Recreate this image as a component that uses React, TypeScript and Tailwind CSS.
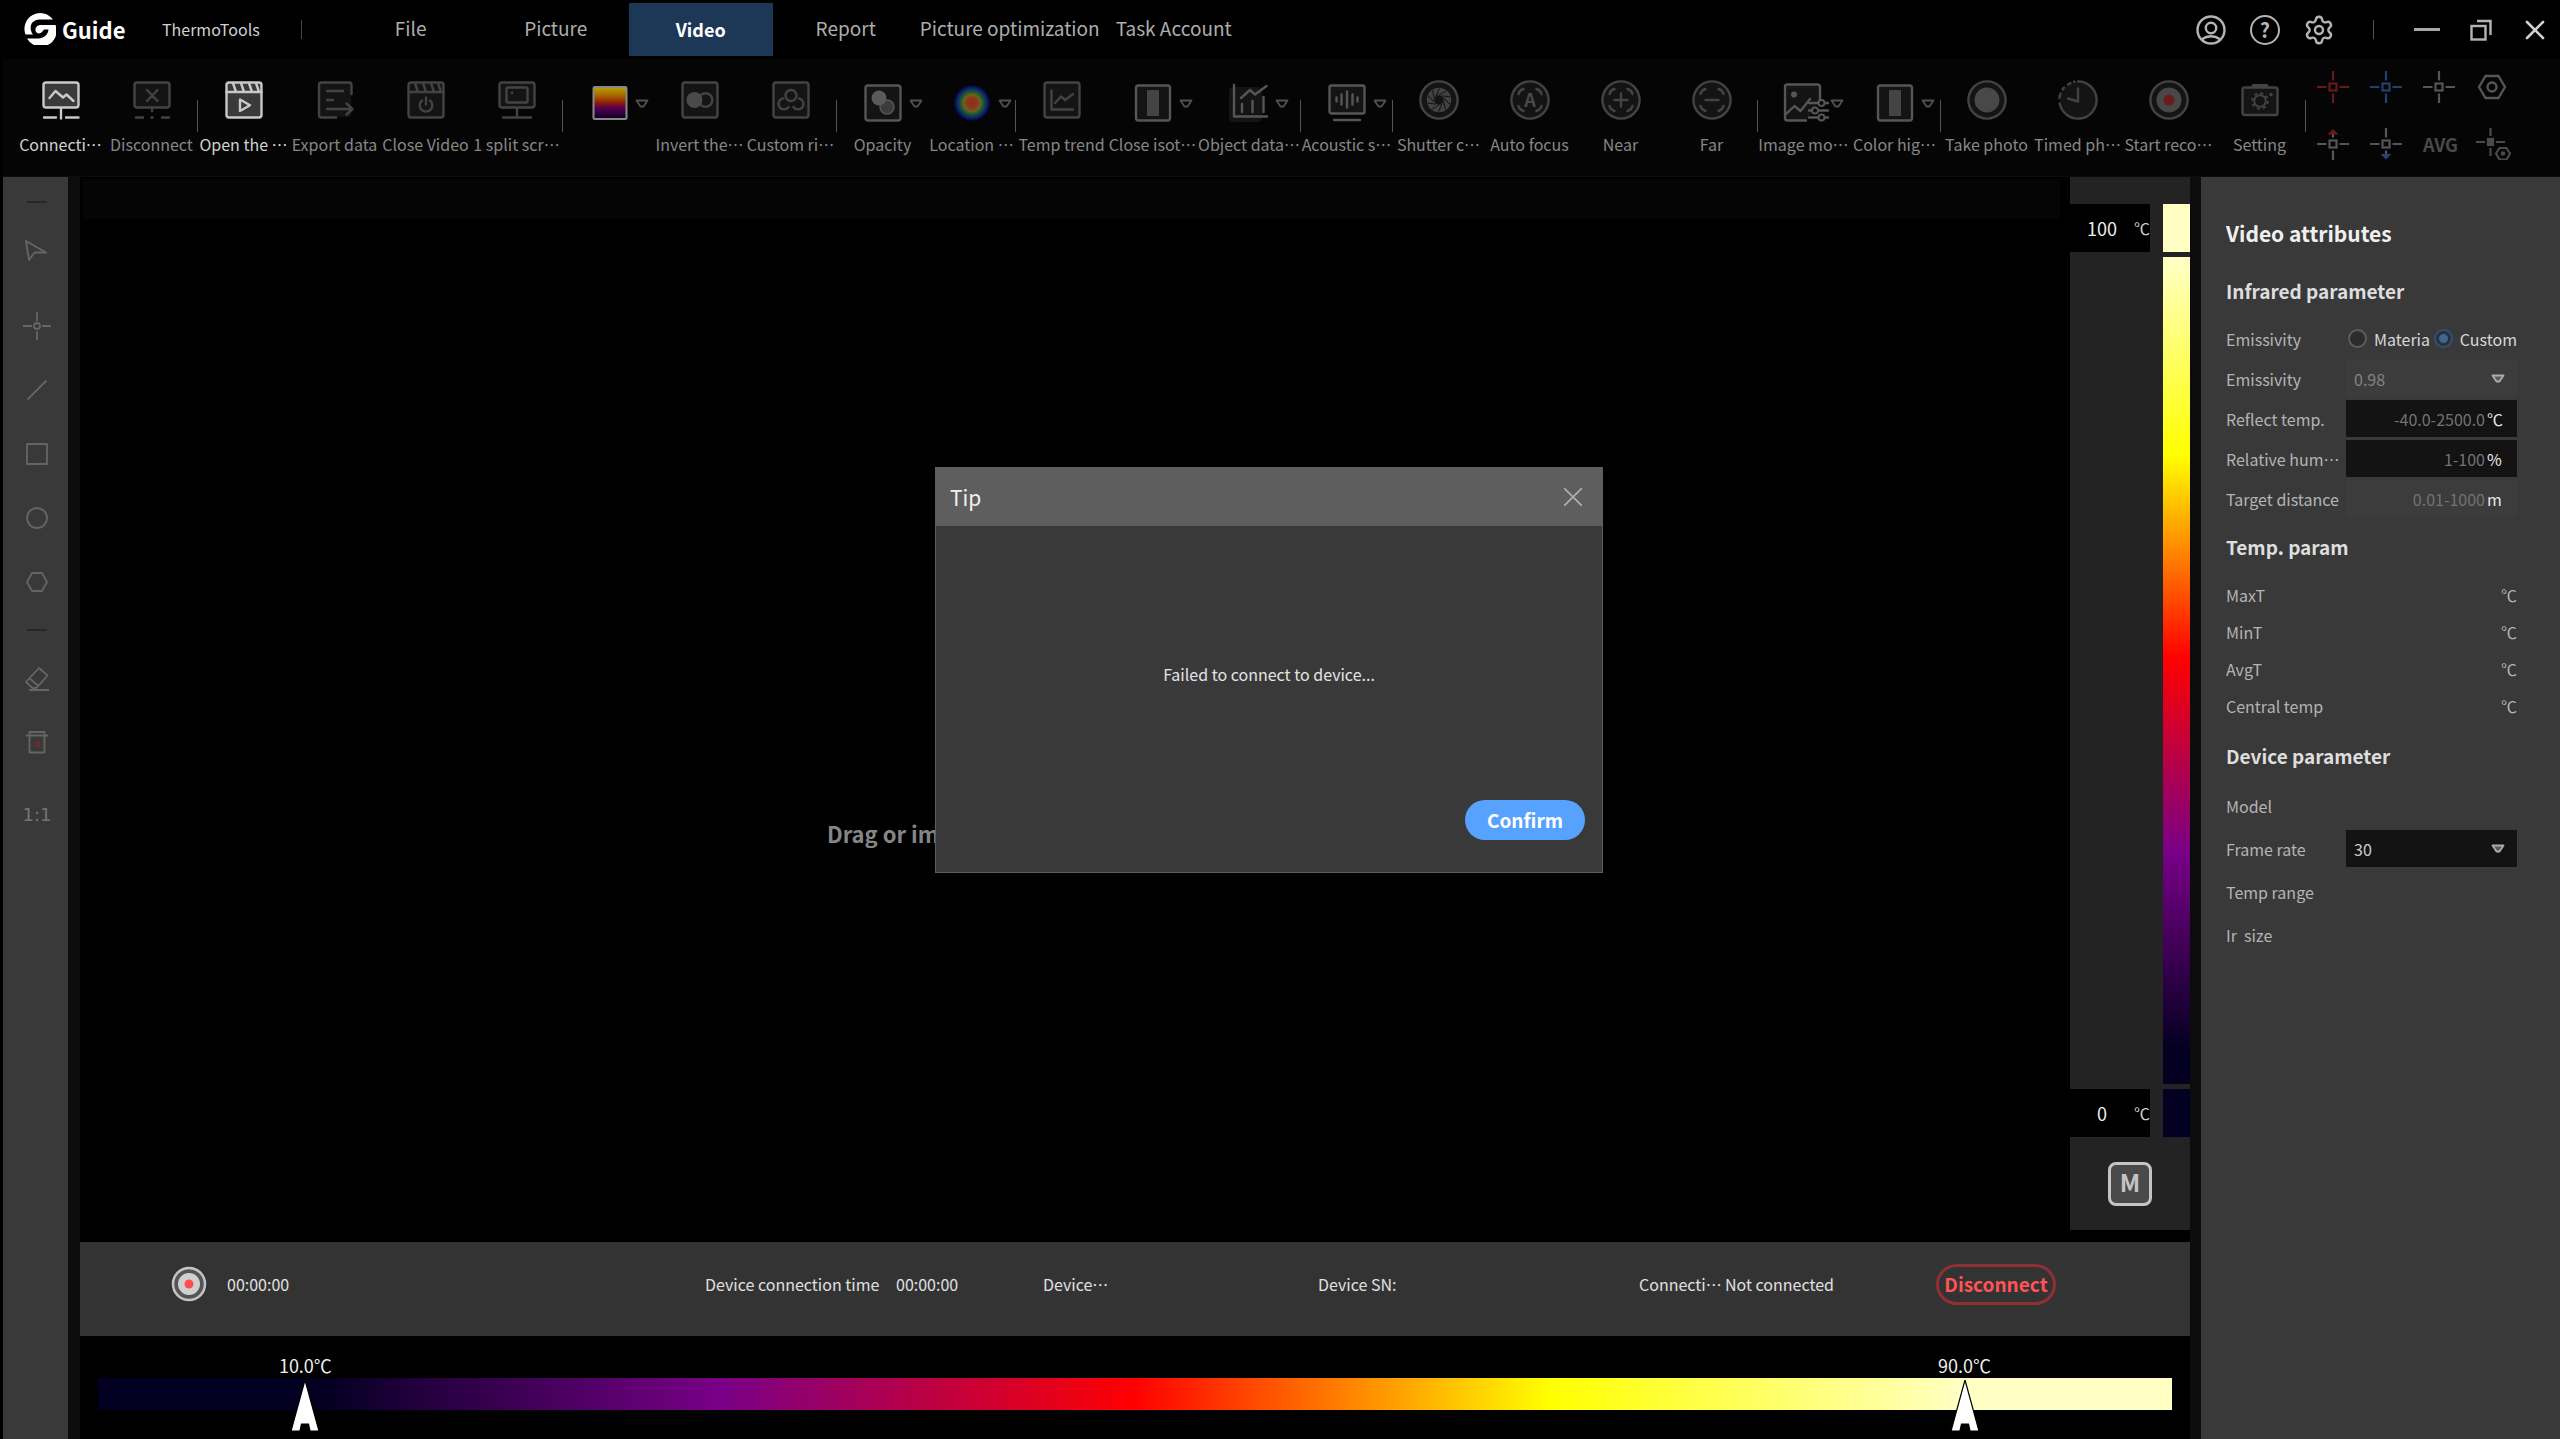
import type { ReactNode } from "react";
import { Settings } from "lucide-react";

/* ---------- shared drawing helpers ---------- */

function Glyph({ color, fill = "#141414", children }: { color: string; fill?: string; children: ReactNode }) {
  return (
    <svg
      width="40"
      height="40"
      viewBox="0 0 40 40"
      fill={fill}
      stroke={color}
      strokeWidth="2.4"
      strokeLinecap="round"
      strokeLinejoin="round"
      className="overflow-visible"
      aria-hidden="true"
    >
      {children}
    </svg>
  );
}

const DIM = "#434343";
const MID = "#565656";
const LIT = "#c9c9c9";

const clapper = (
  <>
    <rect x="2.5" y="2.5" width="35" height="35" rx="2.5" />
    <path d="M2.5 12h35M9 3l3 9M17 3l3 9M25 3l3 9M32 3l3 9" fill="none" />
  </>
);

const focusCorners = (
  <>
    <circle cx="20" cy="20" r="18.6" />
    <path d="M8.5 14q1-4 5-5M26.500 9q4 1 5 5M31.500 26q-1 4-5 5M13.500 31q-4-1-5-5" fill="none" />
  </>
);

const splitPanel = (
  <>
    <rect x="3" y="5.500" width="34" height="35" rx="2.5" />
    <rect x="14" y="10" width="12" height="26" fill="#444" stroke="none" />
  </>
);

const icons: Record<string, ReactNode> = {
  connect: (
    <Glyph color={LIT} fill="#3a3a3a">
      <rect x="2.5" y="2.5" width="35" height="25" rx="2.5" />
      <path d="M8.500 18l6-7 7.500 6.500 3.500-3 7 6.500M20 28v10.500M3 37.500h12M25 37.500h12.500" fill="none" />
    </Glyph>
  ),
  disconnect: (
    <Glyph color={DIM}>
      <rect x="2.5" y="2.5" width="35" height="25" rx="2.5" />
      <path d="M15 10l10.500 11M25.500 10L15 21M20 28v3M4 37.500h7M19.500 37.500h1M30 37.500h7" fill="none" />
    </Glyph>
  ),
  open: (
    <Glyph color={LIT} fill="#3a3a3a">
      {clapper}
      <path d="M16 19.500v11.500l10-5.800z" fill="none" />
    </Glyph>
  ),
  exportData: (
    <Glyph color={DIM}>
      <rect x="4" y="3" width="32" height="34" rx="2" stroke="none" />
      <path
        d="M36.500 14V5q0-2.500-2.500-2.500H6.500Q4 2.500 4 5v30q0 2.500 2.500 2.500H21M12 11h16M12 20h6M12 29h25M31.500 23.500l6 5.500-6 5.500"
        fill="none"
      />
    </Glyph>
  ),
  closeVideo: (
    <Glyph color={DIM}>
      {clapper}
      <path d="M16 20.500a6.300 6.300 0 1 0 8 0M20 17.500v7" fill="none" />
    </Glyph>
  ),
  screen: (
    <Glyph color={DIM}>
      <rect x="2.5" y="2.5" width="35" height="25" rx="2.5" />
      <rect x="9.500" y="7.500" width="21" height="15" rx="1.5" />
      <path d="M15 12.500v.5M20 28v9M6 37.500h28" fill="none" />
    </Glyph>
  ),
  palette: (
    <svg width="40" height="40" viewBox="0 0 40 40" aria-hidden="true" className="overflow-visible">
      <defs>
        <linearGradient id="iron" x1="0" y1="0" x2="0" y2="1">
          <stop offset="0" stopColor="#b5a800" />
          <stop offset="0.3" stopColor="#a85a00" />
          <stop offset="0.5" stopColor="#8c1a08" />
          <stop offset="0.65" stopColor="#580052" />
          <stop offset="1" stopColor="#0a0022" />
        </linearGradient>
      </defs>
      <rect x="4.500" y="7" width="33" height="32" rx="1.500" fill="url(#iron)" stroke="#8a8a8a" strokeWidth="2" />
    </svg>
  ),
  invert: (
    <Glyph color={DIM}>
      <rect x="2.5" y="2.5" width="35" height="35" rx="2.5" />
      <circle cx="25.500" cy="20" r="6.800" />
      <circle cx="14.500" cy="20" r="8" fill="#4a4a4a" stroke="none" />
    </Glyph>
  ),
  custom: (
    <Glyph color={DIM}>
      <rect x="2.5" y="2.5" width="35" height="35" rx="2.5" />
      <circle cx="20" cy="15.500" r="5.500" fill="none" />
      <path d="M12 18.500a5.500 5.500 0 1 0 5.500 8.500M28 18.500a5.500 5.500 0 1 1-5.500 8.500" fill="none" />
    </Glyph>
  ),
  opacity: (
    <Glyph color={MID}>
      <rect x="2.500" y="5.500" width="35" height="35" rx="2.5" />
      <circle cx="24" cy="27" r="7" fill="#3c3c3c" strokeWidth="1.500" />
      <circle cx="16" cy="18" r="7.500" fill="#5a5a5a" stroke="none" />
    </Glyph>
  ),
  location: (
    <svg width="40" height="40" viewBox="0 0 40 40" aria-hidden="true" className="overflow-visible">
      <defs>
        <radialGradient id="spot">
          <stop offset="0" stopColor="#8a2f1c" />
          <stop offset="0.33" stopColor="#8a3c1c" />
          <stop offset="0.45" stopColor="#6a6420" />
          <stop offset="0.6" stopColor="#1d5a30" />
          <stop offset="0.78" stopColor="#0c2f5e" />
          <stop offset="0.92" stopColor="#06085a" />
          <stop offset="1" stopColor="#050510" stopOpacity="0" />
        </radialGradient>
      </defs>
      <circle cx="20" cy="23" r="18.500" fill="url(#spot)" />
    </svg>
  ),
  trend: (
    <Glyph color={DIM}>
      <rect x="2.5" y="2.5" width="35" height="35" rx="2.5" />
      <path d="M9.500 10.500v19H31M13 23l6-6.500 4 3.500 8-6" fill="none" />
    </Glyph>
  ),
  isotherm: <Glyph color={MID}>{splitPanel}</Glyph>,
  chart: (
    <Glyph color={MID}>
      <rect x="0" y="7" width="33" height="35" rx="4" stroke="none" />
      <path d="M5 5v31.500h33M13 24v8M23.500 21v11M34.500 17v15M12 18l9-8 5 4.500L37.500 6" fill="none" />
    </Glyph>
  ),
  acoustic: (
    <Glyph color={MID}>
      <rect x="2.500" y="5.500" width="35" height="28" rx="2" />
      <path d="M9.500 17.500v4M14.500 14.500v10M20 11.500v16M25.500 14.500v10M30.500 17.500v4M7 40h26" fill="none" />
    </Glyph>
  ),
  shutter: (
    <Glyph color={DIM}>
      <circle cx="20" cy="20" r="18.600" />
      <circle cx="20" cy="20" r="8.500" fill="none" strokeWidth="7.500" />
      <g stroke="#141414" strokeWidth="1">
        {[0, 36, 72, 108, 144, 180, 216, 252, 288, 324].map((a) => (
          <path key={a} d="M20 15l7-4" transform={`rotate(${a} 20 20)`} />
        ))}
      </g>
    </Glyph>
  ),
  auto: (
    <Glyph color={DIM}>
      {focusCorners}
      <text
        x="20"
        y="26.500"
        textAnchor="middle"
        fontSize="18"
        stroke="none"
        fill="#4a4a4a"
        fontFamily="Noto Sans CJK SC, sans-serif"
        fontWeight="700"
      >
        A
      </text>
    </Glyph>
  ),
  near: (
    <Glyph color={DIM}>
      {focusCorners}
      <path d="M13.500 20h13M20 13.500v13" />
    </Glyph>
  ),
  far: (
    <Glyph color={DIM}>
      {focusCorners}
      <path d="M13.500 20h13" />
    </Glyph>
  ),
  imageMode: (
    <Glyph color={MID}>
      <path d="M36 21V7q0-2.500-2.500-2.500H3.500Q1 4.500 1 7v31q0 2.500 2.500 2.500H22" />
      <circle cx="10" cy="14.500" r="1.800" fill={MID} />
      <path d="M2 34l8.500-8 6 5L26 19" fill="none" />
      <path d="M25 23h19M25 30.500h19M25 37.500h19" />
      <g fill="#0a0a0a" strokeWidth="2">
        <circle cx="37.500" cy="23" r="3" />
        <circle cx="31" cy="30.500" r="3" />
        <circle cx="37.500" cy="37.500" r="3" />
      </g>
    </Glyph>
  ),
  colorHigh: <Glyph color={MID}>{splitPanel}</Glyph>,
  photo: (
    <Glyph color={DIM}>
      <circle cx="20" cy="20" r="18.600" />
      <circle cx="20" cy="20" r="12.500" fill="#484848" stroke="none" />
    </Glyph>
  ),
  timed: (
    <Glyph color={DIM}>
      <circle cx="20" cy="20" r="18" stroke="none" />
      <path d="M20 1.400a18.600 18.600 0 1 1-18.300 22M1.500 18q.2-2.500 1-4.500M4.500 9.500l1.500-2M10 4.500l2.500-1.500M16 1.800l.5-.1M20 8.500v13l-10-3" fill="none" />
    </Glyph>
  ),
  record: (
    <Glyph color={DIM}>
      <circle cx="20" cy="20" r="18.600" />
      <circle cx="20" cy="20" r="12.500" fill="#484848" stroke="none" />
      <circle cx="20" cy="20" r="5.500" fill="#6a1c1c" stroke="none" />
    </Glyph>
  ),
  camera: (
    <Glyph color={DIM}>
      <rect x="2.5" y="7.500" width="35" height="27.500" rx="2" />
      <path d="M13 5.500h14" fill="none" strokeWidth="3" />
      <circle cx="20" cy="21" r="5.800" strokeWidth="2" />
      <circle cx="20" cy="21" r="7.800" fill="none" strokeWidth="2" strokeDasharray="3 3.130" strokeLinecap="butt" />
      <path d="M31 14.500v.1" strokeWidth="3.500" />
    </Glyph>
  ),
};

/* ---------- toolbar ---------- */

type Tool = { icon: string; label: string; menu?: boolean; lit?: boolean; width?: string };

const groups: Tool[][] = [
  [
    { icon: "connect", label: "Connecti…", lit: true },
    { icon: "disconnect", label: "Disconnect" },
  ],
  [
    { icon: "open", label: "Open the …", lit: true },
    { icon: "exportData", label: "Export data" },
    { icon: "closeVideo", label: "Close Video" },
    { icon: "screen", label: "1 split scr…" },
  ],
  [
    { icon: "palette", label: "", menu: true },
    { icon: "invert", label: "Invert the…" },
    { icon: "custom", label: "Custom ri…" },
  ],
  [
    { icon: "opacity", label: "Opacity", menu: true },
    { icon: "location", label: "Location …", menu: true, width: "w-[87px]" },
  ],
  [
    { icon: "trend", label: "Temp trend" },
    { icon: "isotherm", label: "Close isot…", menu: true },
    { icon: "chart", label: "Object data…", menu: true, width: "w-[102px]" },
  ],
  [{ icon: "acoustic", label: "Acoustic s…", menu: true }],
  [
    { icon: "shutter", label: "Shutter c…" },
    { icon: "auto", label: "Auto focus" },
    { icon: "near", label: "Near" },
    { icon: "far", label: "Far" },
  ],
  [
    { icon: "imageMode", label: "Image mo…", menu: true },
    { icon: "colorHigh", label: "Color hig…", menu: true },
  ],
  [
    { icon: "photo", label: "Take photo" },
    { icon: "timed", label: "Timed ph…" },
    { icon: "record", label: "Start reco…" },
    { icon: "camera", label: "Setting" },
  ],
];

function Arrow({ color, fill = "none" }: { color: string; fill?: string }) {
  return (
    <svg width="14" height="10" viewBox="0 0 14 10" aria-hidden="true">
      <path d="M1.500 1.500h11L8.500 7.500h-3z" fill={fill} stroke={color} strokeWidth="1.800" strokeLinejoin="round" />
    </svg>
  );
}

function ToolButton({ tool }: { tool: Tool }) {
  return (
    <button
      type="button"
      aria-label={tool.label || "Palette"}
      className={`flex flex-col items-center ${tool.width ?? "w-[91px]"}`}
    >
      <span className="relative block">
        {icons[tool.icon]}
        {tool.menu && (
          <span className="absolute top-[19px] left-[46px]">
            <Arrow color="#505050" />
          </span>
        )}
      </span>
      <span className={`mt-3 text-base leading-6 whitespace-nowrap ${tool.lit ? "text-[#d2d2d2]" : "text-[#878787]"}`}>
        {tool.label}
      </span>
    </button>
  );
}

function Cross({ color, up, down }: { color: string; up?: boolean; down?: boolean }) {
  return (
    <svg width="32" height="32" viewBox="0 0 32 32" fill="none" stroke={color} strokeWidth="2.200" aria-hidden="true">
      <rect x="12.500" y="12.500" width="7" height="7" />
      <path d={`M0 16h9.500M22.500 16H32M16 ${up ? 5 : 0}V9.500M16 22.500V${down ? 27 : 32}`} />
      {up && <path d="M10.500 6.500L16 1l5.500 5.500z" fill="#6b1a1c" stroke="none" />}
      {down && <path d="M10.500 26L16 31.500 21.500 26z" fill="#254472" stroke="none" />}
    </svg>
  );
}

const spotTools: { name: string; icon: ReactNode }[] = [
  { name: "Hot spot", icon: <Cross color="#66191c" /> },
  { name: "Cold spot", icon: <Cross color="#22406c" /> },
  { name: "Center spot", icon: <Cross color="#565656" /> },
  {
    name: "Spot settings",
    icon: (
      <svg width="32" height="32" viewBox="0 0 32 32" fill="none" stroke="#565656" strokeWidth="2.400" aria-hidden="true">
        <path d="M9.500 5h13l6.500 11-6.500 11h-13L3 16z" strokeLinejoin="round" />
        <circle cx="16" cy="16" r="4.500" />
      </svg>
    ),
  },
  { name: "Max", icon: <Cross color="#565656" up /> },
  { name: "Min", icon: <Cross color="#565656" down /> },
  { name: "Average", icon: <span className="text-lg leading-8 font-bold text-[#4a4a4a]">AVG</span> },
  {
    name: "Marker settings",
    icon: (
      <svg width="36" height="32" viewBox="0 0 36 32" fill="none" stroke="#4a4a4a" strokeWidth="2.200" aria-hidden="true">
        <rect x="12" y="11" width="5" height="6" fill="#4a4a4a" />
        <path d="M0 14h9M20 14h9M14.500 0v8M14.500 20v8" />
        <path d="M23.500 20h7l3.500 5.500-3.500 6h-7l-3.500-6z" strokeLinejoin="round" />
        <circle cx="27" cy="25.500" r="1.200" />
      </svg>
    ),
  },
];

/* ---------- header ---------- */

const tabs = [
  { label: "File", width: "w-36" },
  { label: "Picture", width: "w-36" },
  { label: "Video", width: "w-36", active: true },
  { label: "Report", width: "w-36" },
  { label: "Picture optimization", width: "w-[182px]" },
  { label: "Task Account", width: "w-36" },
];

function Header() {
  return (
    <header className="flex h-[59px] shrink-0 items-start bg-black pr-[9px] pl-6">
      <div className="flex h-[58px] items-center gap-1.5">
        <svg width="32" height="32" viewBox="0 0 32 32" fill="none" aria-hidden="true">
          <path d="M1.500 21.500A15.800 15.800 0 0 1 29 6.500H15.500C9 6.500 5.500 11.500 7 17.500q.6 2.400 2 4z" fill="#fff" />
          <path d="M3 25.500A15.800 15.800 0 0 0 31.500 12H17c-4 0-6 2.800-5.500 5.500.6 3.200 4.500 3.800 6.500 1.500l2-2.500h4.500c-.5 5.500-5 9-10 9z" fill="#fff" />
        </svg>
        <span className="w-16 text-[22px] leading-8 font-bold text-white">Guide</span>
      </div>
      <span className="ml-9 text-base leading-[59px] text-[#d0d0d0]">ThermoTools</span>
      <span className="mt-5 ml-[41px] h-[19px] w-px bg-[#444]" />
      <nav className="ml-[37px] flex gap-px pt-[3px]">
        {tabs.map((t) => (
          <button
            type="button"
            key={t.label}
            className={`h-[53px] pb-0.5 ${t.width} ${t.active ? "bg-[#1d3857] text-lg font-bold text-white" : "text-[19px] text-[#adadad]"}`}
          >
            {t.label}
          </button>
        ))}
      </nav>
      <div className="ml-auto flex h-[59px] items-center gap-[22px]">
        <button type="button" aria-label="User" className="flex w-8 justify-center">
          <svg width="30" height="30" viewBox="0 0 30 30" fill="none" stroke="#b4b4b4" strokeWidth="2.400" aria-hidden="true">
            <circle cx="15" cy="15" r="13.500" />
            <circle cx="15" cy="13" r="5.200" />
            <path d="M5.500 24.500q9.500-6.500 19 0" />
          </svg>
        </button>
        <button type="button" aria-label="Help" className="flex w-8 justify-center">
          <span className="flex h-[30px] w-[30px] items-center justify-center rounded-full border-2 border-[#b4b4b4] text-xl font-bold text-[#b4b4b4]">
            ?
          </span>
        </button>
        <button type="button" aria-label="Settings" className="flex w-8 justify-center">
          <Settings size={32} strokeWidth={1.8} color="#b4b4b4" />
        </button>
        <span className="flex w-8 justify-center">
          <span className="h-[19px] w-px bg-[#555]" />
        </span>
        <button type="button" aria-label="Minimize" className="flex w-8 justify-center">
          <svg width="26" height="4" aria-hidden="true">
            <rect width="26" height="3" fill="#a8a8a8" />
          </svg>
        </button>
        <button type="button" aria-label="Restore" className="flex w-8 justify-center">
          <svg width="24" height="24" viewBox="0 0 24 24" fill="none" stroke="#b4b4b4" strokeWidth="2.400" aria-hidden="true">
            <rect x="2.500" y="8" width="14" height="13.500" />
            <path d="M8 3h13.500v14" />
          </svg>
        </button>
        <button type="button" aria-label="Close" className="flex w-8 justify-center">
          <svg width="20" height="20" viewBox="0 0 20 20" stroke="#d0d0d0" strokeWidth="2.600" strokeLinecap="round" aria-hidden="true">
            <path d="M2 2l16 16M18 2L2 18" />
          </svg>
        </button>
      </div>
    </header>
  );
}

function Toolbar() {
  return (
    <div className="ml-[3px] flex h-[117px] shrink-0 items-start bg-[#050505] pl-3">
      {groups.map((g, i) => (
        <div key={i} className="flex items-start">
          <div className="flex pt-[21px]">
            {g.map((t) => (
              <ToolButton key={t.icon} tool={t} />
            ))}
          </div>
          <span className="mt-[41px] h-8 w-px bg-[#555]" />
        </div>
      ))}
      <div className="mt-3 ml-[11px] grid grid-cols-4 gap-x-[21px] gap-y-[25px]">
        {spotTools.map((s) => (
          <button type="button" key={s.name} aria-label={s.name} className="h-8 w-8">
            {s.icon}
          </button>
        ))}
      </div>
    </div>
  );
}

/* ---------- drawing tools ---------- */

const shapes: { name: string; art: ReactNode; className?: string }[] = [
  { name: "Select", art: <path d="M3 3l20 11.500H11.500L6 22z" />, className: "mt-0.5 mb-2.5" },
  {
    name: "Point",
    art: (
      <>
        <circle cx="14" cy="14" r="3" />
        <path d="M0 14h9M19 14h9M14 0v9M14 19v9" />
      </>
    ),
  },
  { name: "Line", art: <path d="M4.500 23.500l19-19" /> },
  { name: "Rectangle", art: <rect x="4" y="4" width="20" height="20" /> },
  { name: "Circle", art: <circle cx="14" cy="14" r="10" /> },
  { name: "Polygon", art: <path d="M9 5h10l5 9-5 9H9l-5-9z" /> },
];

const editing: { name: string; art: ReactNode }[] = [
  {
    name: "Eraser",
    art: <path d="M3 18L16 4l8.500 7.500L13.500 24H9.500zM6.500 14.500l9 7.500M6 26h20" />,
  },
  {
    name: "Delete",
    art: (
      <>
        <path d="M3 7.500h22M6 4h16M6.500 4v20.500h15V4" />
        <path d="M11.500 13l5.500 6M17 13l-5.500 6" stroke="#7a2a2e" />
      </>
    ),
  },
];

function ShapeButton({ name, art, className = "" }: { name: string; art: ReactNode; className?: string }) {
  return (
    <button type="button" aria-label={name} className={`flex h-16 w-full items-center justify-center ${className}`}>
      <svg width="28" height="28" viewBox="0 0 28 28" fill="none" stroke="#656565" strokeWidth="1.800" strokeLinejoin="round" aria-hidden="true">
        {art}
      </svg>
    </button>
  );
}

function Rule() {
  return (
    <span className="flex h-8 items-center">
      <span className="h-0.5 w-5 bg-[#272727]" />
    </span>
  );
}

function DrawingTools() {
  return (
    <aside className="mr-px flex w-[65px] shrink-0 flex-col items-center bg-[#393939] pt-[9px] pl-[3px]">
      <Rule />
      {shapes.map((s) => (
        <ShapeButton key={s.name} {...s} />
      ))}
      <Rule />
      {editing.map((s) => (
        <ShapeButton key={s.name} {...s} />
      ))}
      <button type="button" className="mt-[9px] h-16 w-full font-[DejaVu_Sans,sans-serif] text-lg text-[#757575]">
        1:1
      </button>
    </aside>
  );
}

/* ---------- centre ---------- */

function ScaleLimit({ value, swatch, id }: { value: string; swatch: string; id: string }) {
  return (
    <div className="flex h-12 justify-between">
      <div className="flex w-20 items-center justify-end bg-black text-[#eee]">
        <input
          id={id}
          aria-label={id}
          defaultValue={value}
          className="w-16 min-w-0 bg-transparent text-center text-lg outline-none"
        />
        <label htmlFor={id} className="text-base text-[#d0d0d0]">
          ℃
        </label>
      </div>
      <div className={`w-[27px] ${swatch}`} />
    </div>
  );
}

function TemperatureScale() {
  return (
    <div className="mb-3 flex w-[120px] shrink-0 flex-col bg-[#232323] pt-[27px]">
      <ScaleLimit id="High limit" value="100" swatch="bg-[#ffffc4]" />
      <div className="my-[5px] flex grow justify-end">
        <div className="w-[27px] bg-[linear-gradient(180deg,#ffffc8_0%,#ffff00_24%,#ff0000_48.5%,#780087_72%,#030021_96%,#030021_100%)]" />
      </div>
      <ScaleLimit id="Low limit" value="0" swatch="bg-[#030021]" />
      <div className="flex h-[93px] items-center justify-center">
        <button
          type="button"
          aria-label="Manual range"
          className="h-11 w-11 rounded-lg border-[3px] border-[#c4c4c4] bg-[#4a4a4a] pb-1 text-2xl leading-8 font-bold text-[#c4c4c4]"
        >
          M
        </button>
      </div>
    </div>
  );
}

function StatusBar() {
  return (
    <div className="flex h-[94px] shrink-0 items-center bg-[#333] pr-[134px] pb-2.5 pl-[91px] text-base whitespace-nowrap text-[#e0e0e0]">
      <button type="button" aria-label="Record" className="shrink-0">
        <svg width="36" height="36" viewBox="0 0 36 36" aria-hidden="true">
          <circle cx="18" cy="18" r="16" fill="#555" stroke="#c4c4c4" strokeWidth="2.500" />
          <circle cx="18" cy="18" r="11" fill="#d0d0d0" />
          <circle cx="18" cy="18" r="4.500" fill="#ff4d50" />
        </svg>
      </button>
      <span className="w-[498px] pl-5">00:00:00</span>
      <span className="w-[191px]">Device connection time</span>
      <span className="w-[147px]">00:00:00</span>
      <span className="w-[275px]">Device…</span>
      <span className="w-[321px]">Device SN:</span>
      <span className="w-[86px]">Connecti…</span>
      <span>Not connected</span>
      <button
        type="button"
        className="ml-auto flex h-[41px] w-[120px] items-center justify-center rounded-full border-[3px] border-[#8f3034] text-[19px] leading-6 font-bold text-[#ff5357]"
      >
        Disconnect
      </button>
    </div>
  );
}

function Marker({ label, className }: { label: string; className: string }) {
  return (
    <div className={`absolute top-3.5 flex w-24 -translate-x-1/2 flex-col items-center ${className}`}>
      <span className="text-lg leading-[30px] text-[#eee]">{label}</span>
      <svg width="30" height="52" viewBox="0 0 30 52" aria-hidden="true">
        <path d="M15 0L1 51h9l1.500-7h7l1.500 7h9z" fill="#fff" stroke="#000" strokeWidth="1.200" />
      </svg>
    </div>
  );
}

function PaletteBar() {
  return (
    <div className="relative mr-[18px] ml-[18px] h-[103px] shrink-0 pt-[42px]">
      <div className="h-8 bg-[linear-gradient(90deg,#030021_0%,#030021_11%,#1c0038_14.500%,#780087_30%,#ff0000_50%,#ffff00_70%,#ffffc4_90%)]" />
      <Marker label="10.0℃" className="left-[10%]" />
      <Marker label="90.0℃" className="left-[90%]" />
    </div>
  );
}

function Workspace() {
  return (
    <main className="flex min-w-0 grow flex-col bg-black">
      <div className="flex min-h-0 grow">
        <div className="flex min-w-0 grow flex-col">
          <div className="mt-0.5 mr-2.5 ml-0.5 h-10 shrink-0 bg-[#050505]" />
          <div className="flex grow justify-center pt-[598px]">
            <p className="w-[496px] text-[22px] leading-8 font-bold text-[#858585]">Drag or import</p>
          </div>
        </div>
        <TemperatureScale />
      </div>
      <StatusBar />
      <PaletteBar />
    </main>
  );
}

/* ---------- attributes ---------- */

function Row({ label, htmlFor, children }: { label: string; htmlFor?: string; children?: ReactNode }) {
  return (
    <div className="flex h-[37px] items-center justify-between">
      <label htmlFor={htmlFor} className="whitespace-pre text-[#b4b4b4]">
        {label}
      </label>
      {children}
    </div>
  );
}

function Drop({ id, value, disabled }: { id: string; value: string; disabled?: boolean }) {
  return (
    <span className="relative block h-full w-[171px]">
      <select
        id={id}
        disabled={disabled}
        defaultValue={value}
        className={`h-full w-full appearance-none px-2 text-base opacity-100 outline-none ${disabled ? "bg-[#3c3c3c] text-[#828282]" : "bg-[#131313] text-[#ccc]"}`}
      >
        <option>{value}</option>
      </select>
      <span className="pointer-events-none absolute top-3.5 right-3">
        <Arrow color="#adadad" fill="#5a5a5a" />
      </span>
    </span>
  );
}

function Field({ id, hint, unit, disabled }: { id: string; hint: string; unit: string; disabled?: boolean }) {
  return (
    <span className={`flex h-full w-[171px] items-center gap-0.5 ${disabled ? "bg-[#3c3c3c]" : "bg-[#131313]"}`}>
      <input
        id={id}
        disabled={disabled}
        placeholder={hint}
        className="w-[139px] bg-transparent text-right text-base outline-none placeholder:text-[#727272]"
      />
      <span className="text-[#e8e8e8]">{unit}</span>
    </span>
  );
}

function Choice({ label, checked }: { label: string; checked?: boolean }) {
  return (
    <label className="flex items-center gap-[7px] text-[#d8d8d8]">
      <input
        type="radio"
        name="emissivity-mode"
        defaultChecked={checked}
        disabled
        className="h-[19px] w-[19px] appearance-none rounded-full border-2 border-[#5c5c5c] bg-[#2c2c2c] checked:border-[#33506f] checked:bg-[radial-gradient(circle,#41658f_0_4px,#28323e_5px)]"
      />
      {label}
    </label>
  );
}

function Attributes() {
  const heading = "text-[19px] leading-8 font-bold text-[#dedede]";
  return (
    <aside className="w-[359px] shrink-0 bg-[#393939] pt-[38px] pr-[43px] pl-[25px] text-base">
      <h1 className="text-[21px] leading-9 font-bold text-[#f0f0f0]">Video attributes</h1>
      <h2 className={`mt-6 ${heading}`}>Infrared parameter</h2>
      <div className="mt-[13px] flex flex-col gap-[3px]">
        <div className="flex h-[37px] items-center">
          <span className="w-[122px] text-[#b4b4b4]">Emissivity</span>
          <div className="flex grow justify-between" role="radiogroup" aria-label="Emissivity">
            <Choice label="Materia" />
            <Choice label="Custom" checked />
          </div>
        </div>
        <Row label="Emissivity" htmlFor="emissivity">
          <Drop id="emissivity" value="0.98" disabled />
        </Row>
        <Row label="Reflect temp." htmlFor="reflect">
          <Field id="reflect" hint="-40.0-2500.0" unit="℃" />
        </Row>
        <Row label="Relative hum…" htmlFor="humidity">
          <Field id="humidity" hint="1-100" unit="%" />
        </Row>
        <Row label="Target distance" htmlFor="distance">
          <Field id="distance" hint="0.01-1000" unit="m" disabled />
        </Row>
      </div>
      <h2 className={`mt-[14px] ${heading}`}>Temp. param</h2>
      <div className="mt-[13px]">
        {["MaxT", "MinT", "AvgT", "Central temp"].map((name) => (
          <div key={name} className="flex h-[37px] items-center justify-between text-[#b4b4b4]">
            <span>{name}</span>
            <span>℃</span>
          </div>
        ))}
      </div>
      <h2 className={`mt-4 ${heading}`}>Device parameter</h2>
      <div className="mt-[15px] flex flex-col gap-1.5">
        <Row label="Model" />
        <Row label="Frame rate" htmlFor="rate">
          <Drop id="rate" value="30" />
        </Row>
        <Row label="Temp range" />
        <Row label="Ir  size" />
      </div>
    </aside>
  );
}

/* ---------- dialog ---------- */

function TipDialog() {
  return (
    <div className="absolute inset-0 flex items-center justify-center pr-[22px] pb-[99px]">
      <section role="dialog" aria-labelledby="tip-title" className="flex h-[406px] w-[668px] flex-col border border-[#5e5e5e] bg-[#393939]">
        <div className="flex h-[58px] items-center justify-between bg-[#5e5e5e] pr-5 pl-3.5">
          <h2 id="tip-title" className="text-[21px] leading-8 text-[#f0f0f0]">
            Tip
          </h2>
          <button type="button" aria-label="Dismiss">
            <svg width="18" height="18" viewBox="0 0 18 18" stroke="#b0b0b0" strokeWidth="1.600" aria-hidden="true">
              <path d="M0 0l18 18M18 0L0 18" />
            </svg>
          </button>
        </div>
        <p className="flex grow items-center justify-center pt-[22px] text-base text-[#e4e4e4]">Failed to connect to device...</p>
        <div className="flex justify-end pr-[17px] pb-8">
          <button type="button" className="h-10 w-[120px] rounded-full bg-[#58a2ff] text-[19px] leading-6 font-bold text-white">
            Confirm
          </button>
        </div>
      </section>
    </div>
  );
}

export default function App() {
  return (
    <div
      lang="zh-CN"
      className="relative flex h-screen flex-col overflow-hidden bg-black font-['Noto_Sans_CJK_SC',sans-serif]"
    >
      <Header />
      <Toolbar />
      <div className="ml-[3px] flex min-h-0 grow gap-[11px] bg-[#0c0c0c] pt-px">
        <DrawingTools />
        <Workspace />
        <Attributes />
      </div>
      <TipDialog />
    </div>
  );
}
